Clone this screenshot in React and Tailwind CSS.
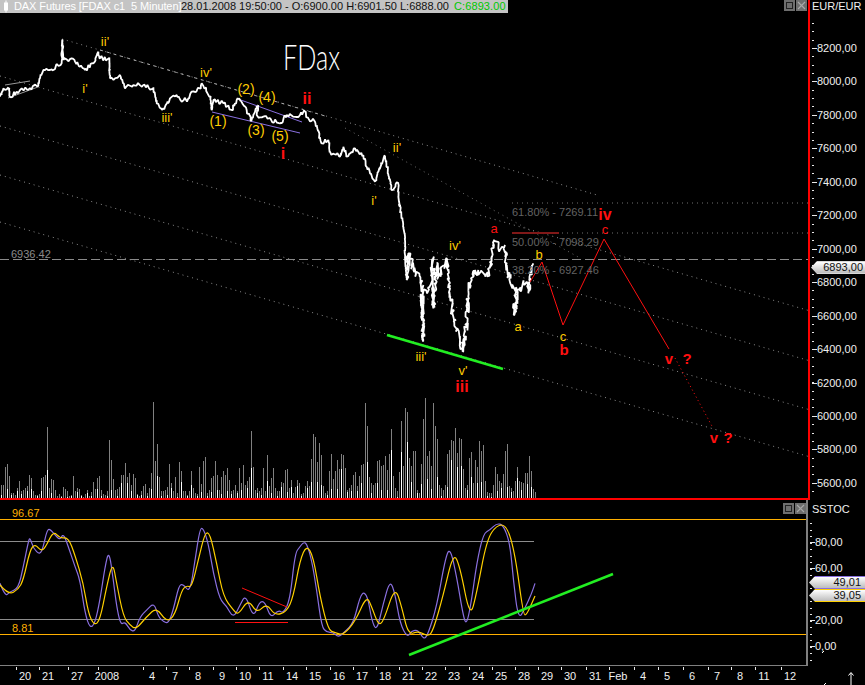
import React from "react";

// traced points, in 3x zoom coordinates of the crops they came from
const priceA = [[0,290],[10,265],[25,262],[30,290],[50,275],[65,265],[80,268],[90,265],[115,258],[120,235],[130,210],[150,210],[185,190],[187,118],[190,180],[215,175],[240,200],[255,210],[280,190],[295,155],[300,175],[327,175],[330,235],[345,235],[360,225],[375,265],[400,255],[430,255],[460,265],[470,310],[490,325],[510,295],[530,285],[545,305],[565,295],[575,275],[600,265],[605,250],[630,290],[635,330],[640,300],[670,310],[695,330],[715,297],[740,330],[755,360],[775,315],[770,345],[790,350],[840,370],[860,345],[900,345],[915,335],[925,355],[945,365],[965,430],[985,420],[990,455],[1020,470],[1030,440],[1040,470],[1065,445],[1090,465],[1100,500]];
const priceB = [[0,130],[15,155],[25,125],[45,78],[60,150],[65,180],[85,160],[85,200],[95,265],[105,320],[105,380],[110,450],[115,370],[130,420],[155,455],[160,635],[155,500],[180,470],[188,390],[190,535],[200,400],[205,440],[230,390],[240,500],[250,560],[260,600],[278,665],[290,580],[295,480],[315,420],[345,440],[360,410],[365,380],[370,335],[385,355],[405,345],[408,400],[425,470],[440,475],[433,555],[445,480],[470,455],[475,490],[480,430],[490,400]];

const purpleA = [[0,250],[15,290],[30,275],[55,265],[70,200],[85,125],[90,112],[100,145],[120,165],[130,140],[140,95],[148,85],[165,105],[180,120],[190,100],[205,140],[225,200],[240,240],[255,340],[270,385],[285,370],[300,300],[315,200],[327,150],[340,240],[350,320],[362,375],[375,365],[390,390],[405,395],[420,350],[440,330],[462,308],[475,350],[490,365],[505,370],[520,330],[537,255],[550,253],[570,278],[585,180],[600,85],[610,85],[625,130],[640,220],[660,300],[680,318],[700,355],[720,315],[737,283],[760,355],[778,305],[795,305],[812,355],[835,330],[850,340],[870,300],[885,160],[900,140]];
const purpleB = [[10,127],[20,130],[35,180],[50,270],[65,380],[80,397],[100,397],[115,412],[135,395],[160,370],[180,290],[193,275],[205,300],[215,360],[230,395],[250,310],[270,240],[285,280],[300,370],[322,413],[335,392],[355,390],[372,420],[385,400],[410,320],[435,180],[450,140],[470,230],[490,350],[500,375],[515,300],[530,190],[550,100],[570,90],[590,70],[610,75],[630,130],[640,240],[655,360],[675,325],[695,280],[705,250]];
const yellowA = [[0,255],[25,285],[55,268],[70,240],[90,150],[105,132],[125,155],[140,135],[160,93],[180,115],[205,112],[225,165],[250,250],[265,340],[283,377],[300,360],[320,260],[338,185],[350,250],[370,350],[390,375],[408,388],[440,350],[470,322],[500,367],[525,345],[545,270],[560,257],[575,262],[595,180],[615,97],[630,100],[650,190],[670,290],[700,330],[715,345],[745,297],[770,340],[800,310],[825,347],[860,335],[880,290],[900,180]];
const yellowB = [[20,135],[40,170],[60,290],[85,390],[105,398],[130,405],[165,365],[200,287],[215,320],[235,375],[250,365],[285,258],[305,320],[325,405],[355,393],[385,410],[400,390],[430,285],[460,157],[480,200],[510,355],[530,280],[560,120],[590,75],[620,75],[645,160],[670,345],[680,345],[705,288]];

const volumes = [285,285,232,222,258,310,310,315,295,273,305,300,295,290,255,265,305,315,315,312,265,262,255,112,295,267,270,300,320,312,320,292,297,305,320,315,258,303,295,297,315,322,312,300,320,307,277,297,264,258,302,312,316,305,150,210,267,300,297,292,255,255,220,262,250,285,253,265,312,318,305,288,282,310,295,250,37,215,163,263,305,305,300,292,222,280,305,262,310,216,245,305,305,315,305,245,295,310,312,232,282,215,202,310,300,265,260,213,255,300,263,243,255,235,270,305,300,285,305,235,280,225,285,275,262,123,232,300,295,305,295,235,305,195,290,265,235,295,305,305,277,280,240,237,295,270,310,292,270,280,
  312,310,288,273,290,207,132,141,218,159,195,290,310,303,245,192,268,245,212,237,192,195,235,300,295,285,255,246,288,258,225,222,39,110,262,280,285,280,215,210,230,225,200,240,193,118,260,295,305,248,93,230,54,68,205,230,183,183,300,310,222,87,25,198,183,230,40,108,148,285,295,302,285,192,180,150,155,115,190,145,148,238,295,287,204,186,280,210,232,155,185,165,273,308,310,310,285,232,252,275,280,252,183,163,290,295,305,273,232,273,278,280,250,250,198,243,297,308];

const channels = [[0,76],[0,126],[0,175],[0,222]];
const labels = [
  ["i'",85,88],["ii'",105,41],["iii'",167,117],["iv'",206,72],["i'",374,200],["ii'",397,147],["iv'",455,245],["iii'",421,356],["v'",463,370],["a",518,326],["b",539,254],["c",563,336],
  ["(1)",218,121],["(2)",246,89],["(3)",256,130],["(4)",267,97],["(5)",280,136],
];
// text, x, y, size, weight
const redLabels = [
  ["i",283,153,16,700],["ii",307,98,16,700],["a",494,228,13,400],["b",564,349,15,700],["c",605,229,13,400],["iii",462,386,16,700],["iv",605,214,16,700],["v",669,358,15,700],["?",687,358,15,700],["v",714,437,15,700],["?",728,437,15,700],
];
const priceAxis = [8200,8000,7800,7600,7400,7200,7000,6800,6600,6400,6200,6000,5800,5600];
const dates = [["20",25],["21",48],["27",77],["2008",107],["4",152],["7",175],["8",198],["9",222],["10",245],["11",268],["14",292],["15",315],["16",339],["17",362],["18",385],["21",408],["22",431],["23",454],["24",478],["25",501],["28",524],["29",547],["30",570],["31",595],["Feb",618],["4",643],["5",667],["6",692],["7",717],["8",740],["11",764],["12",790]];

const font = "font-['Liberation_Sans',Arial,sans-serif]";
const toPts = (arr) => arr.map(([x, y]) => `${x},${y}`).join(" ");
const cropA = (arr) => arr.map(([x, y]) => [x / 3, y / 3]);
const cropB = (arr, ox, oy) => arr.map(([x, y]) => [ox + x / 3, oy + y / 3]);
const stoch = (a, b) => [...cropB(a, 0, 500), ...cropB(b, 300, 500)];

// round the traced corners off through the midpoints
function smooth(points) {
  let d = `M${points[0][0]} ${points[0][1]}`;
  for (let i = 1; i < points.length - 1; i++) {
    const [x, y] = points[i];
    const [nx, ny] = points[i + 1];
    d += ` Q${x} ${y} ${(x + nx) / 2} ${(y + ny) / 2}`;
  }
  const last = points[points.length - 1];
  return `${d} L${last[0]} ${last[1]}`;
}

// little seeded noise so the price line looks like 5 minute ticks
function jagged(points) {
  let seed = 17;
  const rnd = () => { seed = (seed * 16807) % 2147483647; return seed / 2147483647 - 0.5; };
  const out = [];
  points.forEach(([x, y], i) => {
    out.push([x, y]);
    const next = points[i + 1];
    if (!next) return;
    const steps = Math.floor(Math.hypot(next[0] - x, next[1] - y) / 1.5);
    const ampY = x > 405 ? 10 : 5;
    const ampX = x > 405 ? 3.5 : 1;
    for (let s = 1; s < steps; s++) {
      const t = s / steps;
      out.push([x + (next[0] - x) * t + rnd() * ampX, y + (next[1] - y) * t + rnd() * ampY]);
    }
  });
  return out;
}

function WinButton({ close }) {
  return (
    <div className="w-[11px] h-[11px] bg-[#6e6e6e] flex items-center justify-center">
      <svg width="9" height="9" viewBox="0 0 9 9" fill="none" stroke={close ? "#a8a8a8" : "#222"} strokeWidth="1.2" shapeRendering="crispEdges">
        {close ? <path d="M1 1 L8 8 M8 1 L1 8" shapeRendering="auto" /> : <rect x="1.5" y="1.5" width="6" height="6" />}
      </svg>
    </div>
  );
}

function PriceTag({ top, value, edge }) {
  return (
    <div className={`absolute left-[1px] w-[56px] h-[13px] flex items-center justify-end pr-[4px] text-[11px] text-[#111] bg-gradient-to-b from-white to-[#bdbdbd] border-y [clip-path:polygon(0_50%,6px_0,100%_0,100%_100%,6px_100%)] ${top} ${edge}`}>
      {value}
    </div>
  );
}

function Ticks({ from, to, step }) {
  const out = [];
  for (let y = from; y < to; y += step) out.push(y);
  return out.map((y) => <rect key={y} x="2" y={Math.round(y)} width="2" height="1" fill="#e8e8e8" />);
}

function MainChart() {
  const price = jagged([...cropA(priceA), ...cropB(priceB, 370, 130)]);
  return (
    <svg width="808" height="485" viewBox="0 13 808 485" className="block">
      <g stroke="#8c8c8c" strokeDasharray="1 4" fill="none">
        <line x1="62" y1="39" x2="597" y2="195" />
        {channels.map(([x, y]) => <line key={y} x1={x} y1={y} x2="808" y2={y + 808 * 0.29} />)}
        <line x1="345" y1="128" x2="580" y2="258" stroke="#6a6a6a" />
        <line x1="512" y1="203" x2="808" y2="203" stroke="#707070" />
        <line x1="512" y1="233" x2="808" y2="233" stroke="#707070" />
        <line x1="100" y1="50" x2="325" y2="116" stroke="#a8a8a8" strokeDasharray="3 4" />
      </g>
      <line x1="0" y1="259.5" x2="808" y2="259.5" stroke="#8a8a8a" strokeDasharray="9 4" />
      <line x1="512" y1="233" x2="559" y2="233" stroke="#801818" strokeWidth="2" />
      <g stroke="#9a9a9a" fill="none">
        <line x1="5" y1="85" x2="30" y2="81" />
        <line x1="8" y1="98" x2="38" y2="87" />
      </g>
      <g stroke="#8a70e0" fill="none">
        <line x1="212" y1="112" x2="300" y2="133" />
        <line x1="238" y1="99" x2="302" y2="122" />
      </g>

      {/* volume */}
      <g shapeRendering="crispEdges">
        {volumes.map((zy, i) => {
          const h = (325 - zy) / 3;
          const frac = 0.2 + ((i * 37) % 11) / 20;
          return (
            <g key={i}>
              <rect x={i * 2 + 1} y={498 - h} width="1" height={h} fill="#808080" />
              {(i * 7) % 5 < 2 && <rect x={i * 2 + 1} y={498 - h * frac} width="1" height={h * frac} fill="#ffffff" />}
            </g>
          );
        })}
      </g>

      <polyline points={toPts(price)} fill="none" stroke="#ffffff" strokeWidth="1.8" strokeLinejoin="bevel" />

      <polyline points="530,282 542,262 563,325 604,239 669,349" fill="none" stroke="#ff1010" />
      <line x1="675" y1="358" x2="713" y2="428" stroke="#ff1010" strokeDasharray="1 3" />
      <line x1="387" y1="335" x2="503" y2="369" stroke="#22ee22" strokeWidth="2.5" />

      <g className={font} fontSize="11" fill="#636363">
        <text x="11" y="258" fill="#8a8a8a">6936.42</text>
        <text x="512" y="216">61.80% - 7269.11</text>
        <text x="512" y="246">50.00% - 7098.29</text>
        <text x="512" y="274">38.20% - 6927.46</text>
      </g>
      <g className={font} fill="#ffcc00" textAnchor="middle" dominantBaseline="central">
        {labels.map(([t, x, y], i) => <text key={i} x={x} y={y} fontSize={t[0] === "(" ? 14 : 13}>{t}</text>)}
      </g>
      <g className={font} fill="#ff1010" textAnchor="middle" dominantBaseline="central">
        {redLabels.map(([t, x, y, size, weight], i) => <text key={i} x={x} y={y} fontSize={size} fontWeight={weight}>{t}</text>)}
      </g>
      <text x="283" y="70" className="font-['Lato',sans-serif]" fontWeight="300" fontSize="36" fill="#ffffff" textLength="57" lengthAdjust="spacingAndGlyphs">FDax</text>
    </svg>
  );
}

function IndicatorChart() {
  return (
    <svg width="806" height="165" viewBox="0 500 806 165" className="block">
      <g shapeRendering="crispEdges">
        <line x1="0" y1="519.5" x2="806" y2="519.5" stroke="#ffb000" />
        <line x1="0" y1="634.5" x2="806" y2="634.5" stroke="#ffb000" />
        <line x1="0" y1="541.5" x2="534" y2="541.5" stroke="#8c8c8c" />
        <line x1="0" y1="619.5" x2="534" y2="619.5" stroke="#8c8c8c" />
      </g>
      <text x="12" y="517" className={font} fontSize="11" fill="#ffb000">96.67</text>
      <text x="12" y="632" className={font} fontSize="11" fill="#ffb000">8.81</text>
      <path d={smooth(stoch(purpleA, purpleB))} fill="none" stroke="#8a70e0" strokeWidth="1.2" />
      <path d={smooth(stoch(yellowA, yellowB))} fill="none" stroke="#ffd000" strokeWidth="1.2" />
      <line x1="242" y1="588" x2="287" y2="607" stroke="#ff1010" />
      <line x1="235" y1="622.5" x2="288" y2="622.5" stroke="#ff1010" />
      <line x1="409" y1="655" x2="613" y2="574" stroke="#22ee22" strokeWidth="2.5" />
    </svg>
  );
}

export default function App() {
  return (
    <div className={`w-[865px] h-[685px] bg-black overflow-hidden flex flex-col text-[#f0f0f0] ${font}`}>
      {/* price panel */}
      <div className="flex h-[500px]">
        <div className="w-[808px] border-b-2 border-[#ff0000]">
          <div className="flex h-[13px] items-start">
            <div className="flex h-[13px] items-center bg-[#c4c4c4] text-[11px] leading-none whitespace-pre">
              <svg width="14" height="13" viewBox="0 0 14 13" fill="#ffffff">
                <rect x="4" y="2.5" width="4" height="8" />
                <rect x="5.5" y="0.5" width="1" height="12" />
              </svg>
              <span className="w-[167px] text-white tracking-[-0.1px]">DAX Futures [FDAX c1  5 Minuten]</span>
              <span className="w-[273px] text-[#111]">28.01.2008 19:50:00 - O:6900.00 H:6901.50 L:6888.00</span>
              <span className="pr-[2px] text-[#00c800] tracking-[0.1px]">C:6893.00</span>
            </div>
            <div className="ml-auto flex gap-[1px] pr-[1px]">
              <WinButton />
              <WinButton close />
            </div>
          </div>
          <MainChart />
        </div>
        <div className="relative w-[57px] border-l-2 border-[#ff0000] text-[11px]">
          <div className="absolute left-[2px] top-0 leading-[13px]">EUR/EUR</div>
          <svg width="55" height="500" viewBox="0 0 55 500" className="block">
            <Ticks from={22.9} to={496} step={8.36} />
            {priceAxis.map((v, i) => {
              const y = 48 + i * 33.45;
              return (
                <g key={v}>
                  <rect x="2" y={Math.round(y)} width="5" height="1" fill="#e8e8e8" />
                  <text x="7" y={y + 4} fontSize="11" fill="#f0f0f0">{`${v},00`}</text>
                </g>
              );
            })}
          </svg>
          <PriceTag top="top-[261px]" value="6893,00" edge="border-[#d8d8d8]" />
        </div>
      </div>

      {/* stochastic panel */}
      <div className="flex h-[166px]">
        <div className="relative w-[808px] border-r-2 border-b border-[#808080]">
          <IndicatorChart />
          <div className="absolute right-[0px] top-[3px] flex gap-[1px]">
            <WinButton />
            <WinButton close />
          </div>
        </div>
        <div className="relative w-[57px] text-[11px]">
          <div className="absolute left-[4px] top-[3px] leading-[13px]">SSTOC</div>
          <svg width="57" height="166" viewBox="0 500 57 166" className="block">
            <Ticks from={523} to={664} step={6.5} />
            {[["80,00", 542], ["60,00", 568], ["20,00", 620], ["0,00", 646]].map(([t, y]) => (
              <g key={t}>
                <rect x="2" y={y} width="5" height="1" fill="#e8e8e8" />
                <text x="7" y={y + 4} fontSize="11" fill="#f0f0f0">{t}</text>
              </g>
            ))}
            <path d="M14 653 L16 651" stroke="#ffffff" />
          </svg>
          <PriceTag top="top-[76px]" value="49,01" edge="border-[#8a70e0]" />
          <PriceTag top="top-[89px]" value="39,05" edge="border-[#ffd000]" />
        </div>
      </div>

      {/* time axis */}
      <svg width="865" height="19" viewBox="0 666 865 19" className="block">
        {dates.map(([t, x]) => (
          <g key={x}>
            <rect x={x - 9} y="667" width="1" height="3" fill="#e8e8e8" />
            <text x={x} y="680" fontSize="11" fill="#f0f0f0" textAnchor="middle">{t}</text>
          </g>
        ))}
        <path d="M851 685 V673 M848.5 675.5 L851 672.5 L853.5 675.5 M824 685 L826 683" fill="none" stroke="#ffffff" />
      </svg>
    </div>
  );
}
